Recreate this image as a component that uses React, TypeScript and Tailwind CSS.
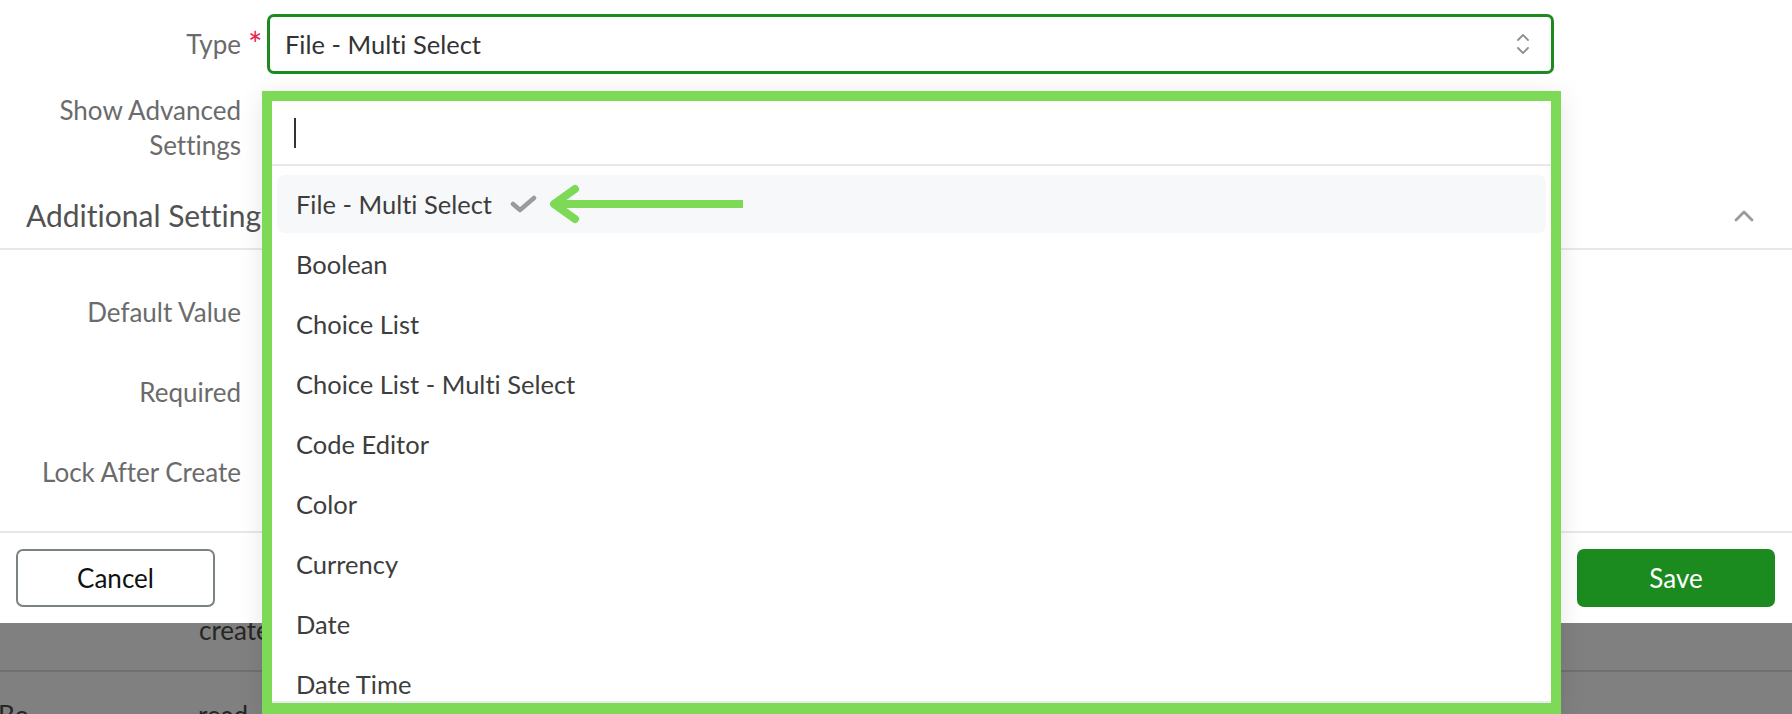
import React from "react";

const items = [
  "Boolean",
  "Choice List",
  "Choice List - Multi Select",
  "Code Editor",
  "Color",
  "Currency",
  "Date",
  "Date Time",
];

function Label({ children }: { children: React.ReactNode }) {
  return (
    <div className="w-[241px] text-right text-[26px] leading-[35px] text-[#6b6b6b]">{children}</div>
  );
}

export default function App() {
  return (
    <div className="relative w-[1792px] h-[714px] overflow-hidden bg-[#808080] font-['Lato','Liberation_Sans',sans-serif] [font-variant-ligatures:none]">
      {/* Modal body */}
      <div className="relative z-10 flex flex-col h-[623px] bg-white">
        {/* Type row */}
        <div className="flex items-center pt-[14px]">
          <Label>Type</Label>
          <div className="w-[26px] h-[60px] pl-[7px] pt-[13px] text-[34px] leading-[34px] text-[#e8254f]">*</div>
          <div className="w-[1287px] h-[60px] border-[3px] border-[#1c8a20] rounded-[7px] flex items-center justify-between pl-[15px] pr-[21px]">
            <span className="text-[25.5px] text-[#333]">File - Multi Select</span>
            <svg width="14" height="22" viewBox="0 0 14 22" fill="none" stroke="#8a8f98" strokeWidth="1.8" strokeLinecap="round" strokeLinejoin="round">
              <polyline points="2,7 7,2 12,7" />
              <polyline points="2,15 7,20 12,15" />
            </svg>
          </div>
        </div>

        {/* Show Advanced Settings */}
        <div className="flex pt-[19px]">
          <Label>
            Show Advanced
            <br />
            Settings
          </Label>
        </div>

        {/* Additional Settings header */}
        <div className="flex items-center justify-between pt-[34px] pb-[15px] pl-[26px] pr-[38px] border-b-2 border-[#e8e8ec]">
          <span className="text-[30px] leading-[36px] text-[#525252]">Additional Settings</span>
          <svg width="20" height="13" viewBox="0 0 20 13" fill="none" stroke="#9a9a9a" strokeWidth="2.8" strokeLinecap="round" strokeLinejoin="round">
            <polyline points="2,11 10,3 18,11" />
          </svg>
        </div>

        {/* Rows */}
        <div className="flex flex-col pt-[22px] pb-[19px]">
          <div className="flex items-center h-[80px]"><Label>Default Value</Label></div>
          <div className="flex items-center h-[80px]"><Label>Required</Label></div>
          <div className="flex items-center h-[80px]"><Label>Lock After Create</Label></div>
        </div>

        {/* Footer */}
        <div className="flex items-center justify-between border-t-2 border-[#e8e8ec] pt-[16px] pb-[16px] pl-[16px] pr-[17px]">
          <button className="w-[199px] h-[58px] rounded-[7px] border-2 border-[#7b847c] bg-white text-[26px] text-[#111]">
            Cancel
          </button>
          <button className="w-[198px] h-[58px] rounded-[7px] bg-[#1b8a1f] text-[26px] text-white">
            Save
          </button>
        </div>
      </div>

      {/* Background page under the overlay */}
      <div className="flex flex-col h-[91px] overflow-hidden">
        <div className="-mt-[3px] h-[52px] pl-[199px] text-[26px] leading-[20px] text-[#262626] border-b-2 border-[#707070] shrink-0">
          create
        </div>
        <div className="flex pt-[30px] text-[26px] leading-[26px] text-[#262626] shrink-0">
          <span className="-ml-[2px] w-[200px]">Bo</span>
          <span>read</span>
        </div>
      </div>

      {/* Dropdown (with annotation frame) */}
      <div className="absolute z-20 left-[262px] top-[91px] w-[1299px] h-[623px] border-[10px] border-b-[11px] border-[#7ed957] shadow-[0_4px_24px_rgba(0,0,0,0.10)]">
        <div className="flex flex-col h-full bg-white overflow-hidden border-b-2 border-[#ebebef]">
          <div className="h-[65px] shrink-0 flex items-center pl-[22px] border-b-2 border-[#e8e8ec]">
            <div className="w-[2px] h-[30px] bg-[#333]" />
          </div>
          <div className="flex flex-col gap-[2px] px-[5px] pt-[9px]">
            <div className="h-[58px] shrink-0 flex items-center px-[19px] rounded-[8px] bg-[#f7f8fa] text-[25.5px] text-[#3d3d3d]">
              <span>File - Multi Select</span>
              <svg className="ml-[18px]" width="27" height="18" viewBox="0 0 27 18" fill="none" stroke="#9b9b9b" strokeWidth="4.5" strokeLinecap="round" strokeLinejoin="round">
                <polyline points="3,9 10,15 24,3" />
              </svg>
              <svg className="ml-[12px]" width="196" height="40" viewBox="0 0 196 40" fill="none" stroke="#7ed957" strokeWidth="8" strokeLinejoin="round">
                <line x1="6" y1="20" x2="194" y2="20" />
                <polyline points="26,5 5,20 26,35" strokeLinecap="round" />
              </svg>
            </div>
            {items.map((t) => (
              <div key={t} className="h-[58px] shrink-0 flex items-center px-[19px] text-[25.5px] text-[#3d3d3d]">
                {t}
              </div>
            ))}
          </div>
        </div>
      </div>
    </div>
  );
}
